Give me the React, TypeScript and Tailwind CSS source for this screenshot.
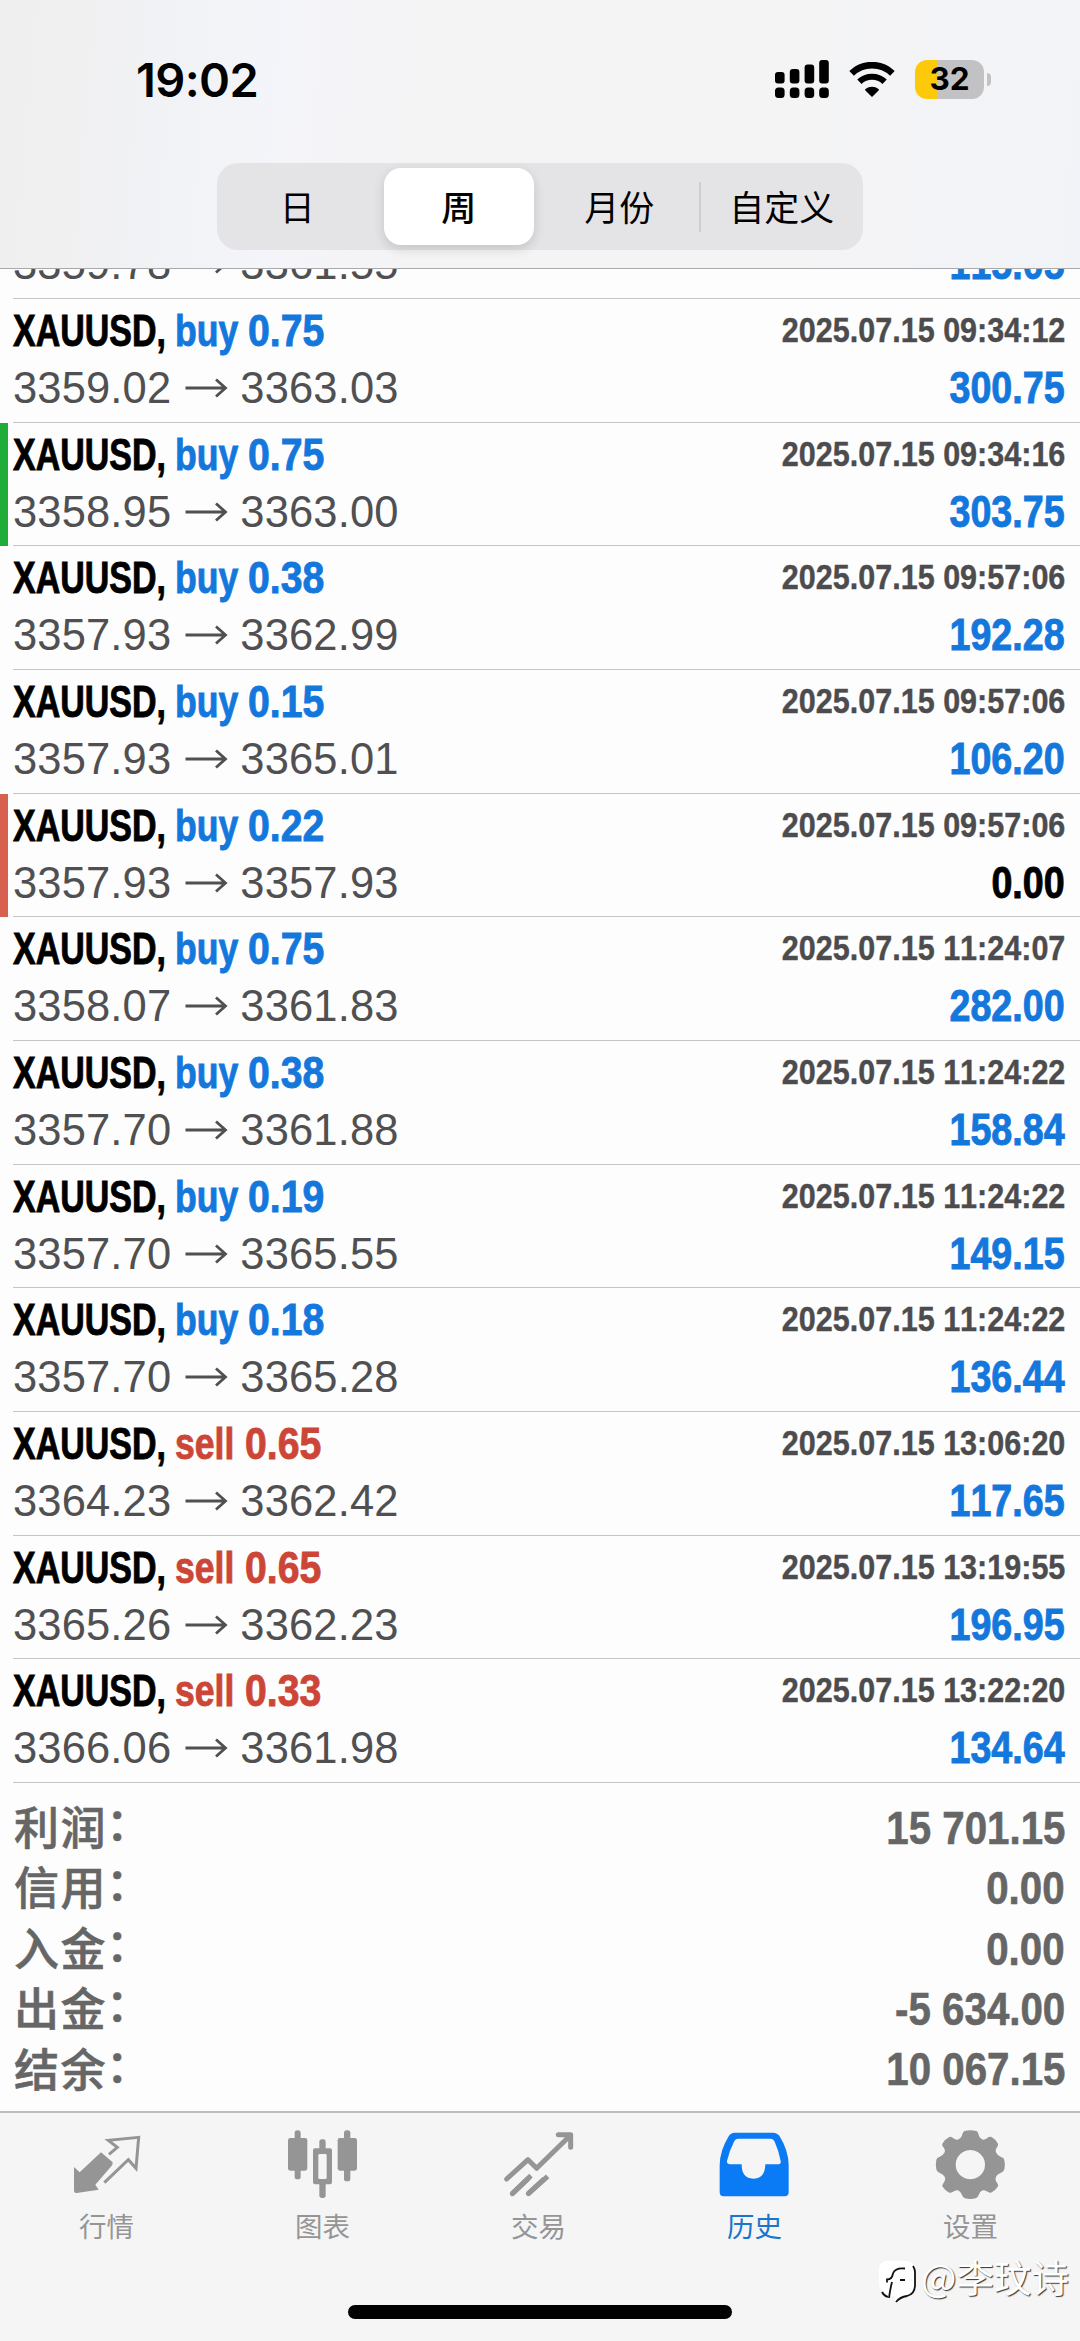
import type { ReactNode } from 'react';
import clsx from 'clsx';

type Deal = {
  side: 'buy' | 'sell';
  volume: string;
  open: string;
  close: string;
  time: string;
  profit: string;
  mark?: 'tp' | 'sl';
};

const deals: Deal[] = [
  { side: 'buy', volume: '0.75', open: '3359.02', close: '3363.03', time: '2025.07.15 09:34:12', profit: '300.75' },
  { side: 'buy', volume: '0.75', open: '3358.95', close: '3363.00', time: '2025.07.15 09:34:16', profit: '303.75', mark: 'tp' },
  { side: 'buy', volume: '0.38', open: '3357.93', close: '3362.99', time: '2025.07.15 09:57:06', profit: '192.28' },
  { side: 'buy', volume: '0.15', open: '3357.93', close: '3365.01', time: '2025.07.15 09:57:06', profit: '106.20' },
  { side: 'buy', volume: '0.22', open: '3357.93', close: '3357.93', time: '2025.07.15 09:57:06', profit: '0.00', mark: 'sl' },
  { side: 'buy', volume: '0.75', open: '3358.07', close: '3361.83', time: '2025.07.15 11:24:07', profit: '282.00' },
  { side: 'buy', volume: '0.38', open: '3357.70', close: '3361.88', time: '2025.07.15 11:24:22', profit: '158.84' },
  { side: 'buy', volume: '0.19', open: '3357.70', close: '3365.55', time: '2025.07.15 11:24:22', profit: '149.15' },
  { side: 'buy', volume: '0.18', open: '3357.70', close: '3365.28', time: '2025.07.15 11:24:22', profit: '136.44' },
  { side: 'sell', volume: '0.65', open: '3364.23', close: '3362.42', time: '2025.07.15 13:06:20', profit: '117.65' },
  { side: 'sell', volume: '0.65', open: '3365.26', close: '3362.23', time: '2025.07.15 13:19:55', profit: '196.95' },
  { side: 'sell', volume: '0.33', open: '3366.06', close: '3361.98', time: '2025.07.15 13:22:20', profit: '134.64' },
];

const summary = [
  { label: '利润', value: '15 701.15' },
  { label: '信用', value: '0.00' },
  { label: '入金', value: '0.00' },
  { label: '出金', value: '-5 634.00' },
  { label: '结余', value: '10 067.15' },
];

const periods = ['日', '周', '月份', '自定义'];

function StatusBar() {
  return (
    <div className="flex h-[160px] items-center pr-[89px] pl-[136px]">
      <span className="font-[Inter,sans-serif] text-[47px] leading-none font-semibold tracking-[-0.6px] text-black">19:02</span>
      <div className="ml-auto flex items-center">
        <svg className="h-[38px] w-[54px]" viewBox="0 0 54 38" fill="#000">
          <rect x="0" y="12" width="9.6" height="11.5" rx="3" />
          <rect x="14.8" y="9" width="9.6" height="14.5" rx="3" />
          <rect x="29.6" y="4.5" width="9.6" height="19" rx="3" />
          <rect x="44.2" y="0" width="9.6" height="23.5" rx="3" />
          <rect x="0" y="27.5" width="9.6" height="10.5" rx="3.5" />
          <rect x="14.8" y="27.5" width="9.6" height="10.5" rx="3.5" />
          <rect x="29.6" y="27.5" width="9.6" height="10.5" rx="3.5" />
          <rect x="44.2" y="27.5" width="9.6" height="10.5" rx="3.5" />
        </svg>
        <svg className="ml-5 h-[35px] w-[46px]" viewBox="0 0 46 35" fill="none" stroke="#000">
          <path d="M2.6 11.3a29.5 29.5 0 0 1 40.8 0" strokeWidth="6.6" />
          <path d="M10.4 19.8a18.2 18.2 0 0 1 25.2 0" strokeWidth="6.2" />
          <path d="M23 35l-6.6-6.6a1 1 0 0 1 .1-1.5 10.6 10.6 0 0 1 13 0 1 1 0 0 1 .1 1.5z" fill="#000" stroke="none" />
        </svg>
        <div className="ml-5 flex h-[39px] w-[69px] items-center justify-center rounded-[12px] bg-linear-to-r from-[#fcc90b] from-34% to-[#c2c2c4] to-34%">
          <span className="font-[Inter,sans-serif] text-[31.5px] leading-none font-bold text-black">32</span>
        </div>
        <div className="ml-[3px] h-[13px] w-1 rounded-r-full bg-[#c2c2c4]" />
      </div>
    </div>
  );
}

function PeriodSwitch() {
  return (
    <div className="mx-auto mt-1 w-[645px]">
      <div className="-ml-px grid h-[87px] grid-cols-4 items-center rounded-[21px] bg-[#e4e4e7]">
        {periods.map((period, i) => (
          <div
            key={period}
            className={clsx(
              'flex items-center justify-center pb-[2px] font-["Noto_Sans_CJK_SC",sans-serif] text-[35px] leading-none text-black',
              i === 1 ? 'mx-[6px] h-[77px] rounded-[17px] bg-white font-medium shadow-[0_4px_12px_rgba(0,0,0,0.14)]' : 'h-[50px]',
              i === 2 && 'border-r-2 border-[#cfcfd2]',
            )}
          >
            {period}
          </div>
        ))}
      </div>
    </div>
  );
}

function Prices({ open, close }: { open: string; close: string }) {
  return (
    <div className="flex items-center text-[43.5px] leading-[50px] tracking-[0.15px] text-[#505052]">
      <span>{open}</span>
      <svg className="mr-[12px] ml-[14px] h-[20px] w-[43px]" viewBox="0 0 43 20" fill="none" stroke="currentColor" strokeWidth="2.8">
        <path d="M0.5 10h40M31 1.5l9.5 8.5-9.5 8.5" />
      </svg>
      <span>{close}</span>
    </div>
  );
}

function DealRow({ deal }: { deal: Deal }) {
  return (
    <div className="relative flex h-[123.67px] justify-between pr-[15px] pl-[13px]">
      {deal.mark && (
        <div className={clsx('absolute inset-y-0 left-0 w-2', deal.mark === 'tp' ? 'bg-[#1fac38]' : 'bg-[#d8604f]')} />
      )}
      <div className="pt-[7px]">
        <div className="flex text-[45px] leading-[50px] font-bold [-webkit-text-stroke:0.9px_currentColor]">
          <span className="w-[162px] whitespace-nowrap">
            <span className="inline-block origin-left scale-x-[0.755] text-black">XAUUSD,</span>
          </span>
          <span className={clsx('flex whitespace-nowrap', deal.side === 'buy' ? 'text-[#1477dc]' : 'text-[#cc4638]')}>
            <span className={clsx(deal.side === 'buy' ? 'w-[73px]' : 'w-[70px]')}>
              <span className="inline-block origin-left scale-x-[0.79]">{deal.side}</span>
            </span>
            <span className="inline-block origin-left scale-x-[0.87]">{deal.volume}</span>
          </span>
        </div>
        <div className="mt-[7px]">
          <Prices open={deal.open} close={deal.close} />
        </div>
      </div>
      <div className="flex flex-col items-end pt-[11px] font-bold">
        <span className="origin-right scale-x-[0.885] text-[34.5px] leading-[40px] text-[#4c4c4e] [-webkit-text-stroke:0.4px_currentColor] [font-kerning:none]">
          {deal.time}
        </span>
        <span
          className={clsx(
            'mt-[13px] origin-right scale-x-[0.855] text-[44px] leading-[50px] [-webkit-text-stroke:0.9px_currentColor] [font-kerning:none]',
            deal.profit === '0.00' ? 'text-black' : 'text-[#1477dc]',
          )}
        >
          {deal.profit}
        </span>
      </div>
      <div className="absolute right-0 bottom-0 left-[13px] h-px bg-[#c6c6c8]" />
    </div>
  );
}

function Tab({ label, viewBox, active, children }: { label: string; viewBox: string; active?: boolean; children: ReactNode }) {
  return (
    <div className={clsx('flex flex-1 flex-col items-center', active ? 'text-[#0a7bf5]' : 'text-[#959595]')}>
      <svg className="h-[72px] w-[72px] overflow-visible" viewBox={viewBox} fill="currentColor">
        {children}
      </svg>
      <span className={clsx('mt-[12px] mr-[3px] font-["Noto_Sans_CJK_SC",sans-serif] text-[27.5px] leading-[28px]', active && 'text-[#1a76cc]')}>
        {label}
      </span>
    </div>
  );
}

function TabBar() {
  return (
    <nav className="relative flex h-[230px] border-t-2 border-[#bcbcbe] bg-[#f5f5f5] pt-[14px]">
      <Tab label="行情" viewBox="216 110 216 216">
        <path d="M303 186l35 30-1 8-51 59 10 15-66 10q-8 1-8-7v-71l17 16z" />
        <path d="M327 192l25-21-27-21 91-9-8 93-23-26-72 69" fill="none" stroke="currentColor" strokeWidth="9" />
      </Tab>
      <Tab label="图表" viewBox="864 110 216 216">
        <rect x="884" y="120" width="18" height="147" rx="8" />
        <rect x="864" y="143" width="58" height="98" rx="7" />
        <rect x="1032" y="120" width="19" height="153" rx="8" />
        <rect x="1013" y="143" width="58" height="98" rx="7" />
        <rect x="958" y="147" width="19" height="40" rx="8" />
        <rect x="958" y="270" width="19" height="53" rx="8" />
        <path fillRule="evenodd" d="M945 174h45q6 0 6 6v96q0 6-6 6h-45q-6 0-6-6v-96q0-6 6-6zm14 17q-4 0-4 4v67q0 4 4 4h17q4 0 4-4v-67q0-4-4-4z" />
      </Tab>
      <Tab label="交易" viewBox="312 110 216 216">
        <g fill="none" stroke="currentColor" strokeWidth="15" strokeLinecap="round" strokeLinejoin="round">
          <path d="M320 266l64-58 26 26 100-98M475 133h37v38" />
          <path d="M337 310l56-54M385 310l58-52" strokeLinecap="butt" />
          <path d="M337 310l45-43M385 310l45-42" />
        </g>
      </Tab>
      <Tab label="历史" viewBox="960 110 216 216" active>
        <path
          fillRule="evenodd"
          d="M1004 127h115q13 0 20 11 26 42 27 86v82q0 12-12 12h-183q-12 0-12-12v-82q1-44 27-86 6-11 18-11zm11 18q-9 0-13 9-14 27-21 58-1 10 9 10h35q0 43 35 43t36-43h37q11 0 9-10-6-32-18-58-4-9-13-9z"
        />
      </Tab>
      <Tab label="设置" viewBox="468 110 216 216">
        <path
          fillRule="evenodd"
          d="M553 122q18-4 36 0 5 2 8 15 3 9 12 11 7 1 17-8 5-2 9 0 12 7 19 20 1 4-2 9-7 10-4 17 3 9 15 14 9 2 10 9 3 14 0 28-1 7-10 10-12 4-15 12-4 8 3 18 5 7 3 11-7 13-21 19-4 1-10-3-8-6-15-4-9 3-12 14-3 9-9 10-16 4-32 0-6-1-9-10-4-11-12-14-7-2-15 4-6 4-11 3-14-6-21-19-1-4 4-11 7-10 3-18-4-8-16-12-8-3-9-10-3-14 0-28 1-7 9-9 12-5 16-14 3-7-5-17-4-5-2-9 7-13 21-20 4-2 10 2 9 8 15 6 9-2 12-11 4-13 8-15zM571 179a44 44 0 1 0 .1 0z"
        />
      </Tab>
      <div className="absolute top-[192px] left-[348px] h-[14px] w-[384px] rounded-full bg-black" />
    </nav>
  );
}

function Watermark() {
  return (
    <div className="absolute top-[2253px] left-[878px] flex items-center">
      <svg className="h-[46px] w-[40px] overflow-visible" viewBox="0 0 40 46">
        <path d="M10 8h17q10 0 10 11v13q0 9-8 12-6 1-11 6-2-4-1-7Q1 42 1 30V17Q1 8 10 8z" fill="#fff" />
        <path d="M35 13q2 3 2 6v13q0 9-8 11-7 1-11 6M4 39q2 4 6 5" fill="none" stroke="#111" strokeWidth="1.8" />
        <path d="M27 15.5q-10-1-12 5-1 6-6 6v3M14 29q-2 8-3 16M22 27h5" fill="none" stroke="#111" strokeWidth="1.8" />
      </svg>
      <span className="ml-[3px] font-['Noto_Sans_CJK_SC',sans-serif] text-[37.5px] leading-[46px] whitespace-nowrap text-white [text-shadow:1px_1px_1px_#333]">
        @李玟诗
      </span>
    </div>
  );
}

export default function App() {
  return (
    <div className="relative flex h-[2341px] w-[1080px] flex-col overflow-hidden bg-[#fdfdfd] font-['Liberation_Sans',sans-serif]">
      <header className="h-[269px] shrink-0 overflow-hidden border-b border-[#a9a9ab] bg-[linear-gradient(95deg,#f0efef_0%,#f0f1f3_12%,#f4f5fa_26%,#f4f4f5_40%,#f4f4f5_75%,#f1f3f8_100%)]">
        <div className="-mt-px">
          <StatusBar />
          <PeriodSwitch />
        </div>
      </header>

      <main className="flex flex-1 flex-col">
        {/* row scrolled halfway under the header */}
        <div className="relative flex h-[30px] items-end justify-between overflow-hidden pr-[15px] pb-[10px] pl-[13px]">
          <Prices open="3359.78" close="3361.55" />
          <span className="origin-right scale-x-[0.855] text-[44px] leading-[50px] font-bold text-[#1477dc] [-webkit-text-stroke:0.9px_currentColor] [font-kerning:none]">
            115.05
          </span>
          <div className="absolute right-0 bottom-0 left-[13px] h-px bg-[#c6c6c8]" />
        </div>

        {deals.map((deal, i) => (
          <DealRow key={i} deal={deal} />
        ))}

        <div className="pt-[15px] pr-[15px] pl-[14px] text-[#666]">
          {summary.map(({ label, value }) => (
            <div key={label} className="flex h-[60.4px] items-center justify-between leading-none">
              <span className="flex pb-[5px] font-['Noto_Sans_CJK_SC',sans-serif] text-[45px] font-medium tracking-[1.5px] [-webkit-text-stroke:0.6px_currentColor]">
                {label}
                <span className="-mt-1 -ml-px">：</span>
              </span>
              <span className="origin-right scale-x-[0.885] pt-px text-[45.5px] font-bold [-webkit-text-stroke:0.6px_currentColor] [font-kerning:none]">
                {value}
              </span>
            </div>
          ))}
        </div>
      </main>

      <TabBar />
      <Watermark />
    </div>
  );
}
